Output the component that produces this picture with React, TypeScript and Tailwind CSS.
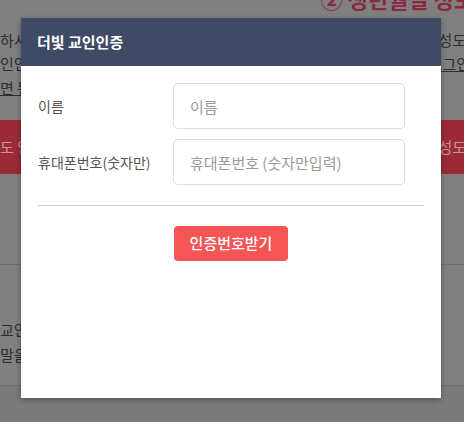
import React from "react";

const font = { fontFamily: '"Noto Sans CJK KR", "Noto Sans", sans-serif' };

export default function App() {
  return (
    <div className="relative w-[464px] h-[422px] overflow-hidden bg-[#808080]" style={font}>
      {/* background page (already dimmed) */}
      <div className="flex flex-col">
        <div className="h-[12px] flex justify-end overflow-hidden">
          <div className="mt-[-18px] text-[22px] font-bold text-[#8a2840] whitespace-nowrap mr-[-10px]">② 생년월일 정보</div>
        </div>
        <div className="flex flex-col text-[15px] text-[#2e2e2e] leading-[24px] pt-[16px]">
          <div className="flex justify-between"><span>하시</span><span className="mr-[-2px]">성도</span></div>
          <div className="flex justify-between"><span>인인</span><span className="underline mr-[-6px]">로그인</span></div>
          <div className="flex justify-between"><span className="underline">면 된</span><span></span></div>
        </div>
        <div className="mt-[20px] h-[54px] bg-[#9b2b38] flex items-center justify-between text-[15px] text-[#c9959c]">
          <span>도 인</span><span className="mr-[-2px]">성도</span>
        </div>
        <div className="h-[90px]"></div>
        <div className="h-px bg-[#6f6f6f]"></div>
        <div className="flex flex-col text-[15px] text-[#2e2e2e] leading-[25px] pt-[52px] h-[120px]">
          <span>교인</span>
          <span>말을</span>
        </div>
        <div className="h-px bg-[#6f6f6f]"></div>
        <div className="h-[40px] bg-[#7b7b7b]"></div>
      </div>

      {/* modal */}
      <div className="absolute left-[21px] top-[18px] w-[420px] h-[380px] bg-white shadow-[0_2px_6px_rgba(0,0,0,0.35)] flex flex-col">
        <div className="h-[48px] bg-[#3f4a64] flex items-center px-[16px]">
          <span className="text-white text-[15px] font-bold">더빛 교인인증</span>
        </div>
        <div className="flex flex-col px-[17px] pt-[17px]">
          <div className="flex flex-col gap-[10px] pr-[19px]">
            <div className="flex items-center">
              <label className="w-[135px] text-[14px] text-[#555]">이름</label>
              <input
                className="w-[232px] h-[46px] border border-[#dcdcdc] rounded-[5px] px-[16px] text-[15px] outline-none placeholder:text-[#9a9a9a]"
                placeholder="이름"
                style={font}
              />
            </div>
            <div className="flex items-center">
              <label className="w-[135px] text-[14px] text-[#555]">휴대폰번호(숫자만)</label>
              <input
                className="w-[232px] h-[46px] border border-[#dcdcdc] rounded-[5px] px-[16px] text-[15px] outline-none placeholder:text-[#9a9a9a]"
                placeholder="휴대폰번호 (숫자만입력)"
                style={font}
              />
            </div>
          </div>
          <div className="mt-[20px] h-px bg-[#d0d0d0]"></div>
          <div className="flex justify-center mt-[20px]">
            <button className="w-[114px] h-[35px] rounded-[4px] bg-[#f55555] text-white text-[15px] font-medium" style={font}>
              인증번호받기
            </button>
          </div>
        </div>
      </div>
    </div>
  );
}
